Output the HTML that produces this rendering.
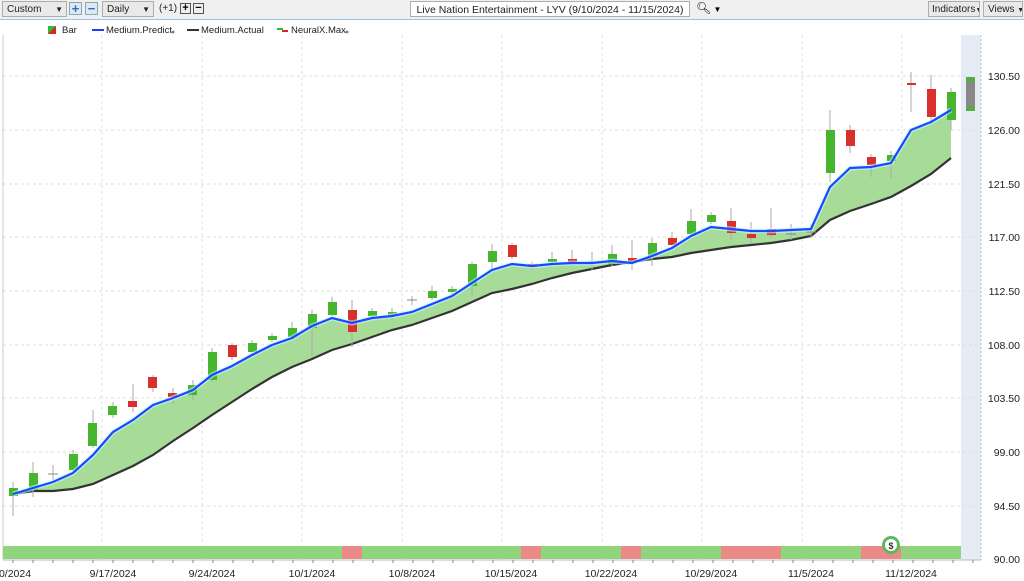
<!DOCTYPE html>
<html><head><meta charset="utf-8"><style>
body{margin:0;width:1024px;height:581px;overflow:hidden;background:#fff;font-family:"Liberation Sans",sans-serif;}
.tb{position:absolute;left:0;top:0;width:1024px;height:19px;background:#f0f0f0;border-bottom:1px solid #9cc3e6;}
.box{position:absolute;top:1px;height:16px;border:1px solid #adadad;background:#e9e9e9;font-size:10px;line-height:16px;padding-left:4px;box-sizing:border-box;color:#222;white-space:nowrap;overflow:hidden;}
.btn{position:absolute;top:2px;width:13px;height:13px;border:1px solid #8aa;background:#dde8f4;color:#2a6fc0;font-size:13px;line-height:12px;text-align:center;font-weight:bold;box-sizing:border-box;}
.sb{position:absolute;top:3px;width:11px;height:11px;border:1px solid #555;background:#eee;font-size:11px;line-height:9px;text-align:center;box-sizing:border-box;font-weight:bold}
</style></head><body>
<div class="tb">
<div class="box" style="left:2px;width:65px;">Custom<span style="position:absolute;right:3px;font-size:8px">▼</span></div>
<div class="btn" style="left:69px">+</div><div class="btn" style="left:85px">−</div>
<div class="box" style="left:102px;width:52px;">Daily<span style="position:absolute;right:3px;font-size:8px">▼</span></div>
<div style="position:absolute;left:159px;top:3px;font-size:10px;color:#222">(+1)</div>
<div class="sb" style="left:180px">+</div><div class="sb" style="left:193px">−</div>
<div class="box" style="left:410px;width:280px;background:#fff;text-align:center;padding:0;font-size:10.5px">Live Nation Entertainment - LYV (9/10/2024 - 11/15/2024)</div>
<div style="position:absolute;left:696px;top:1px;font-size:12px">&#x1F50D;&#xFE0E;<span style="font-size:8px"> ▼</span></div>
<div class="box" style="left:928px;width:52px;padding-left:3px">Indicators<span style="font-size:7px">▼</span></div>
<div class="box" style="left:983px;width:40px;">Views <span style="font-size:7px">▼</span></div>
</div>
<svg style="position:absolute;left:0;top:0" width="1024" height="581" font-family="Liberation Sans, sans-serif">
<g font-size="9.5" fill="#222">
<rect x="48" y="26" width="8" height="8" fill="#d22"/><polygon points="48,34 56,26 48,26" fill="#3b3"/>
<text x="62" y="33">Bar</text>
<rect x="92" y="29" width="12" height="2" fill="#1e3cff"/><text x="106" y="33">Medium.Predict</text><circle cx="173" cy="32" r="1.5" fill="#5a8fb0"/>
<rect x="187" y="29" width="12" height="2" fill="#333"/><text x="201" y="33">Medium.Actual</text>
<rect x="277" y="28" width="6" height="2" fill="#3b3"/><rect x="282" y="30" width="6" height="2" fill="#d22"/><text x="291" y="33">NeuralX.Max</text><circle cx="347" cy="32" r="1.5" fill="#5a8fb0"/>
</g>
<rect x="961" y="35" width="20" height="525" fill="#e6ecf5"/>
<line x1="981" y1="35" x2="981" y2="560" stroke="#9cc3e6" stroke-dasharray="2,2"/>
<g stroke="#ddd" stroke-dasharray="3,3">
<line x1="3" y1="76" x2="981" y2="76"/><line x1="3" y1="130" x2="981" y2="130"/><line x1="3" y1="184" x2="981" y2="184"/><line x1="3" y1="237" x2="981" y2="237"/><line x1="3" y1="291" x2="981" y2="291"/><line x1="3" y1="345" x2="981" y2="345"/><line x1="3" y1="398" x2="981" y2="398"/><line x1="3" y1="452" x2="981" y2="452"/><line x1="3" y1="506" x2="981" y2="506"/>
<line x1="102" y1="35" x2="102" y2="560"/><line x1="202" y1="35" x2="202" y2="560"/><line x1="302" y1="35" x2="302" y2="560"/><line x1="402" y1="35" x2="402" y2="560"/><line x1="502" y1="35" x2="502" y2="560"/><line x1="602" y1="35" x2="602" y2="560"/><line x1="702" y1="35" x2="702" y2="560"/><line x1="802" y1="35" x2="802" y2="560"/><line x1="902" y1="35" x2="902" y2="560"/>
</g>
<line x1="3" y1="35" x2="3" y2="560" stroke="#ccc"/>
<polygon fill="#a6dc98" points="13,494 33,488 53,482 73,473 93,455 113,432 133,420 153,405 173,398 193,390 212,375 232,366 252,355 272,345 292,338 312,326 332,318 352,323 372,318 392,316 412,312 432,304 452,296 472,283 492,270 512,264 532,266 552,264 572,263 592,263 612,261 632,263 652,256 672,248 691,236 711,227 731,229 751,231 771,231 791,230 811,229 830,187 850,168 871,167 891,163 911,130 931,122 951,110 951,158 931,174 911,186 891,197 871,204 850,211 830,220 811,236 791,240 771,243 751,245 731,247 711,250 691,253 672,257 652,259 632,262 612,265 592,269 572,273 552,278 532,284 512,289 492,293 472,302 452,311 432,318 412,325 392,330 372,337 352,344 332,350 312,359 292,367 272,377 252,389 232,402 212,415 193,428 173,441 153,455 133,466 113,475 93,484 73,489 53,491 33,491 13,494"/>
<polyline fill="none" stroke="#333" stroke-width="2.2" points="13,494 33,491 53,491 73,489 93,484 113,475 133,466 153,455 173,441 193,428 212,415 232,402 252,389 272,377 292,367 312,359 332,350 352,344 372,337 392,330 412,325 432,318 452,311 472,302 492,293 512,289 532,284 552,278 572,273 592,269 612,265 632,262 652,259 672,257 691,253 711,250 731,247 751,245 771,243 791,240 811,236 830,220 850,211 871,204 891,197 911,186 931,174 951,158"/>
<g stroke="#aaa" stroke-width="1">
<line x1="13" y1="482" x2="13" y2="516"/><line x1="33" y1="462" x2="33" y2="497"/><line x1="53" y1="465" x2="53" y2="480"/><line x1="73" y1="450" x2="73" y2="472"/><line x1="93" y1="410" x2="93" y2="448"/><line x1="113" y1="402" x2="113" y2="418"/><line x1="133" y1="384" x2="133" y2="412"/><line x1="153" y1="375" x2="153" y2="392"/><line x1="173" y1="388" x2="173" y2="404"/><line x1="193" y1="380" x2="193" y2="400"/><line x1="212" y1="348" x2="212" y2="382"/><line x1="232" y1="343" x2="232" y2="360"/><line x1="252" y1="340" x2="252" y2="355"/><line x1="272" y1="333" x2="272" y2="342"/><line x1="292" y1="322" x2="292" y2="340"/><line x1="312" y1="310" x2="312" y2="356"/><line x1="332" y1="297" x2="332" y2="318"/><line x1="352" y1="300" x2="352" y2="347"/><line x1="372" y1="308" x2="372" y2="320"/><line x1="392" y1="308" x2="392" y2="320"/><line x1="412" y1="296" x2="412" y2="305"/><line x1="432" y1="286" x2="432" y2="300"/><line x1="452" y1="286" x2="452" y2="295"/><line x1="472" y1="262" x2="472" y2="295"/><line x1="492" y1="244" x2="492" y2="270"/><line x1="512" y1="243" x2="512" y2="259"/><line x1="532" y1="262" x2="532" y2="270"/><line x1="552" y1="252" x2="552" y2="264"/><line x1="572" y1="250" x2="572" y2="265"/><line x1="592" y1="252" x2="592" y2="270"/><line x1="612" y1="245" x2="612" y2="266"/><line x1="632" y1="240" x2="632" y2="270"/><line x1="652" y1="238" x2="652" y2="266"/><line x1="672" y1="232" x2="672" y2="248"/><line x1="691" y1="209" x2="691" y2="236"/><line x1="711" y1="212" x2="711" y2="224"/><line x1="731" y1="208" x2="731" y2="240"/><line x1="751" y1="222" x2="751" y2="244"/><line x1="771" y1="208" x2="771" y2="238"/><line x1="791" y1="224" x2="791" y2="240"/><line x1="811" y1="224" x2="811" y2="238"/><line x1="830" y1="110" x2="830" y2="182"/><line x1="850" y1="125" x2="850" y2="153"/><line x1="871" y1="154" x2="871" y2="177"/><line x1="891" y1="151" x2="891" y2="178"/><line x1="911" y1="72" x2="911" y2="112"/><line x1="931" y1="75" x2="931" y2="125"/><line x1="951" y1="88" x2="951" y2="130"/>
</g>
<g fill="#46b62e">
<rect x="9" y="488" width="9" height="8"/><rect x="29" y="473" width="9" height="17"/><rect x="69" y="454" width="9" height="16"/><rect x="88" y="423" width="9" height="23"/><rect x="108" y="406" width="9" height="9"/><rect x="188" y="385" width="9" height="10"/><rect x="208" y="352" width="9" height="28"/><rect x="248" y="343" width="9" height="9"/><rect x="268" y="336" width="9" height="4"/><rect x="288" y="328" width="9" height="9"/><rect x="308" y="314" width="9" height="14"/><rect x="328" y="302" width="9" height="13"/><rect x="368" y="311" width="9" height="5"/><rect x="388" y="312" width="9" height="4"/><rect x="428" y="291" width="9" height="7"/><rect x="448" y="289" width="9" height="3"/><rect x="468" y="264" width="9" height="22"/><rect x="488" y="251" width="9" height="11"/><rect x="548" y="259" width="9" height="3"/><rect x="608" y="254" width="9" height="10"/><rect x="648" y="243" width="9" height="13"/><rect x="687" y="221" width="9" height="13"/><rect x="707" y="215" width="9" height="7"/><rect x="826" y="130" width="9" height="43"/><rect x="887" y="155" width="9" height="6"/><rect x="947" y="92" width="9" height="28"/>
</g>
<g fill="#d9302c">
<rect x="128" y="401" width="9" height="6"/><rect x="148" y="377" width="9" height="11"/><rect x="168" y="393" width="9" height="4"/><rect x="228" y="345" width="9" height="12"/><rect x="348" y="310" width="9" height="22"/><rect x="508" y="245" width="9" height="12"/><rect x="528" y="264" width="9" height="3"/><rect x="568" y="259" width="9" height="3"/><rect x="628" y="258" width="9" height="4"/><rect x="668" y="238" width="9" height="7"/><rect x="727" y="221" width="9" height="12"/><rect x="747" y="234" width="9" height="4"/><rect x="767" y="229" width="9" height="6"/><rect x="846" y="130" width="9" height="16"/><rect x="867" y="157" width="9" height="8"/><rect x="907" y="83" width="9" height="2"/><rect x="927" y="89" width="9" height="28"/>
</g>
<g stroke="#888"><line x1="48" y1="474" x2="58" y2="474"/><line x1="407" y1="300" x2="417" y2="300"/><line x1="587" y1="262" x2="597" y2="262"/><line x1="786" y1="234" x2="796" y2="234"/><line x1="806" y1="232" x2="816" y2="232"/></g>
<rect x="966" y="77" width="9" height="34" fill="#888"/><rect x="966" y="77" width="9" height="5" fill="#5aa84a"/><rect x="966" y="106" width="9" height="5" fill="#5aa84a"/>
<polyline fill="none" stroke="#bff" stroke-width="5" opacity="0.6" points="13,494 33,488 53,482 73,473 93,455 113,432 133,420 153,405 173,398 193,390 212,375 232,366 252,355 272,345 292,338 312,326 332,318 352,323 372,318 392,316 412,312 432,304 452,296 472,283 492,270 512,264 532,266 552,264 572,263 592,263 612,261 632,263 652,256 672,248 691,236 711,227 731,229 751,231 771,231 791,230 811,229 830,187 850,168 871,167 891,163 911,130 931,122 951,110"/>
<polyline fill="none" stroke="#2244ff" stroke-width="2.2" points="13,494 33,488 53,482 73,473 93,455 113,432 133,420 153,405 173,398 193,390 212,375 232,366 252,355 272,345 292,338 312,326 332,318 352,323 372,318 392,316 412,312 432,304 452,296 472,283 492,270 512,264 532,266 552,264 572,263 592,263 612,261 632,263 652,256 672,248 691,236 711,227 731,229 751,231 771,231 791,230 811,229 830,187 850,168 871,167 891,163 911,130 931,122 951,110"/>
<rect x="3" y="546" width="958" height="13" fill="#90d47e"/>
<g fill="#e98a86"><rect x="342" y="546" width="20" height="13"/><rect x="521" y="546" width="20" height="13"/><rect x="621" y="546" width="20" height="13"/><rect x="721" y="546" width="60" height="13"/><rect x="861" y="546" width="40" height="13"/></g>
<circle cx="891" cy="545" r="9" fill="#5cb85c"/><circle cx="891" cy="545" r="6" fill="#fff"/><text x="891" y="549" font-size="9" text-anchor="middle" font-weight="bold" fill="#333">$</text>
<line x1="3" y1="560" x2="981" y2="560" stroke="#bbb"/>
<g stroke="#888"><line x1="13" y1="560" x2="13" y2="563"/><line x1="33" y1="560" x2="33" y2="563"/><line x1="53" y1="560" x2="53" y2="563"/><line x1="73" y1="560" x2="73" y2="563"/><line x1="93" y1="560" x2="93" y2="563"/><line x1="113" y1="560" x2="113" y2="563"/><line x1="133" y1="560" x2="133" y2="563"/><line x1="153" y1="560" x2="153" y2="563"/><line x1="173" y1="560" x2="173" y2="563"/><line x1="193" y1="560" x2="193" y2="563"/><line x1="213" y1="560" x2="213" y2="563"/><line x1="233" y1="560" x2="233" y2="563"/><line x1="253" y1="560" x2="253" y2="563"/><line x1="273" y1="560" x2="273" y2="563"/><line x1="293" y1="560" x2="293" y2="563"/><line x1="313" y1="560" x2="313" y2="563"/><line x1="333" y1="560" x2="333" y2="563"/><line x1="353" y1="560" x2="353" y2="563"/><line x1="373" y1="560" x2="373" y2="563"/><line x1="393" y1="560" x2="393" y2="563"/><line x1="413" y1="560" x2="413" y2="563"/><line x1="433" y1="560" x2="433" y2="563"/><line x1="453" y1="560" x2="453" y2="563"/><line x1="473" y1="560" x2="473" y2="563"/><line x1="493" y1="560" x2="493" y2="563"/><line x1="513" y1="560" x2="513" y2="563"/><line x1="533" y1="560" x2="533" y2="563"/><line x1="553" y1="560" x2="553" y2="563"/><line x1="573" y1="560" x2="573" y2="563"/><line x1="593" y1="560" x2="593" y2="563"/><line x1="613" y1="560" x2="613" y2="563"/><line x1="633" y1="560" x2="633" y2="563"/><line x1="653" y1="560" x2="653" y2="563"/><line x1="673" y1="560" x2="673" y2="563"/><line x1="693" y1="560" x2="693" y2="563"/><line x1="713" y1="560" x2="713" y2="563"/><line x1="733" y1="560" x2="733" y2="563"/><line x1="753" y1="560" x2="753" y2="563"/><line x1="773" y1="560" x2="773" y2="563"/><line x1="793" y1="560" x2="793" y2="563"/><line x1="813" y1="560" x2="813" y2="563"/><line x1="833" y1="560" x2="833" y2="563"/><line x1="853" y1="560" x2="853" y2="563"/><line x1="873" y1="560" x2="873" y2="563"/><line x1="893" y1="560" x2="893" y2="563"/><line x1="913" y1="560" x2="913" y2="563"/><line x1="933" y1="560" x2="933" y2="563"/><line x1="953" y1="560" x2="953" y2="563"/><line x1="973" y1="560" x2="973" y2="563"/></g>
<g font-size="10.5" fill="#222" text-anchor="middle">
<text x="15" y="577">0/2024</text><text x="113" y="577">9/17/2024</text><text x="212" y="577">9/24/2024</text><text x="312" y="577">10/1/2024</text><text x="412" y="577">10/8/2024</text><text x="511" y="577">10/15/2024</text><text x="611" y="577">10/22/2024</text><text x="711" y="577">10/29/2024</text><text x="811" y="577">11/5/2024</text><text x="911" y="577">11/12/2024</text>
</g>
<g font-size="10.5" fill="#222" text-anchor="end">
<text x="1020" y="80">130.50</text><text x="1020" y="134">126.00</text><text x="1020" y="188">121.50</text><text x="1020" y="241">117.00</text><text x="1020" y="295">112.50</text><text x="1020" y="349">108.00</text><text x="1020" y="402">103.50</text><text x="1020" y="456">99.00</text><text x="1020" y="510">94.50</text><text x="1020" y="563">90.00</text>
</g>
</svg>
</body></html>
